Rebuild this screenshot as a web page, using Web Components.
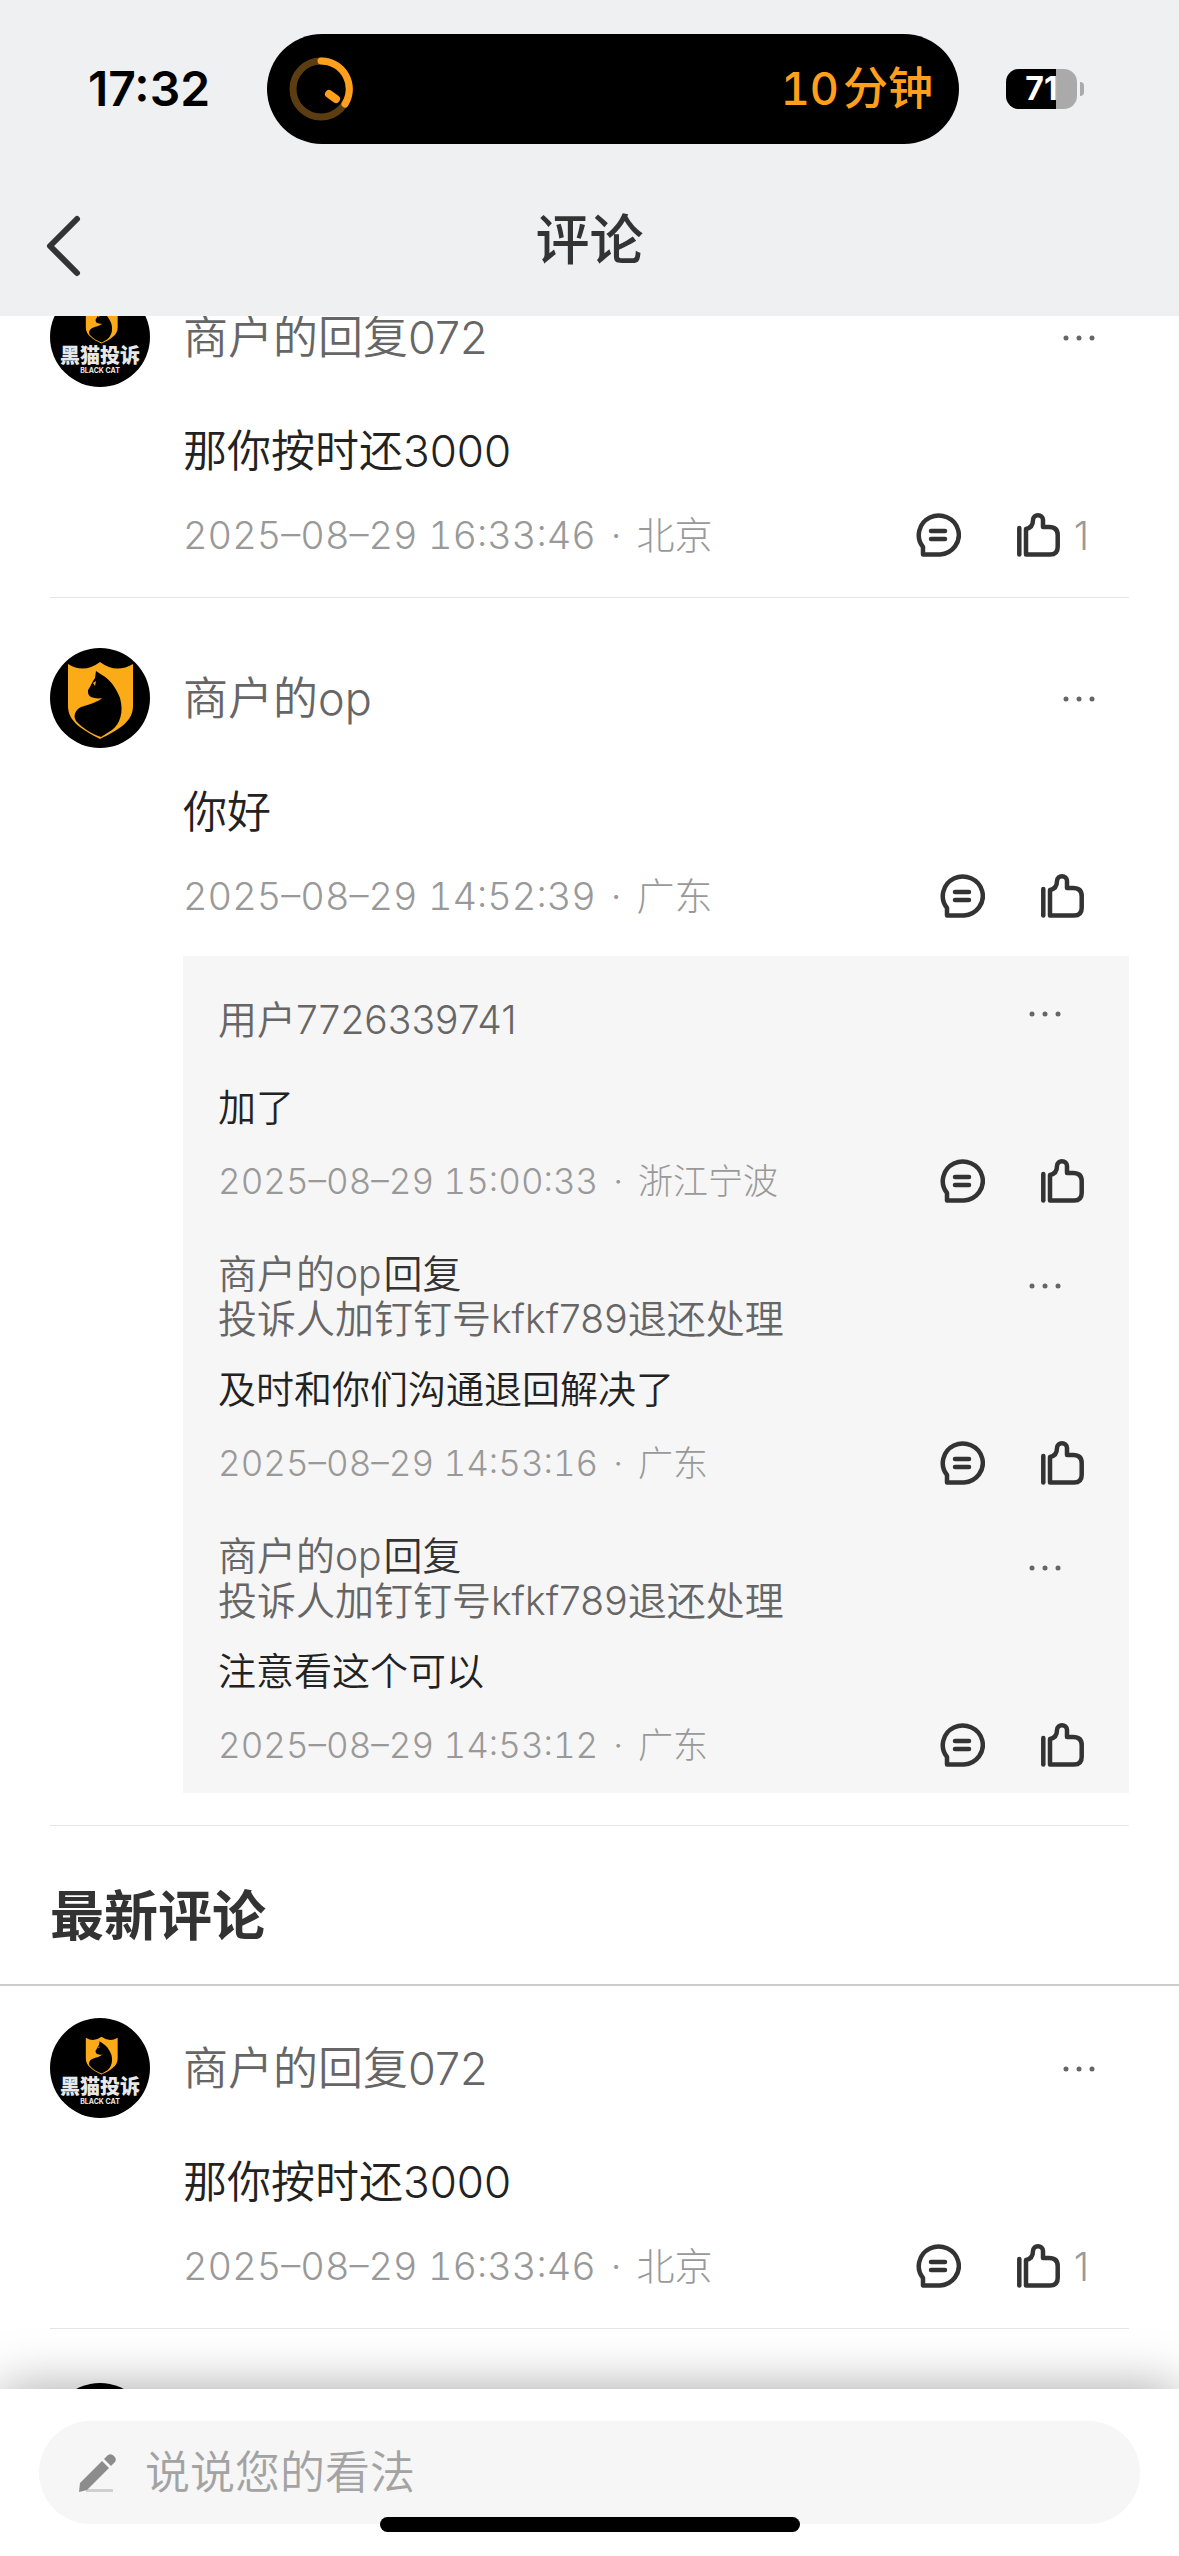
<!DOCTYPE html>
<html lang="zh-CN">
<head>
<meta charset="utf-8">
<meta name="viewport" content="width=device-width, initial-scale=1">
<title>评论</title>
<style>
    body {
        margin: 0;
        background: #fff;
        font-family: Inter, "Noto Sans CJK SC", sans-serif;
        font-weight: 350;
        color: #333;
    }
</style>
</head>
<body>
<comment-page>
    <status-bar slot="top" time="17:32" timer="10" unit="分钟" battery="71"></status-bar>
    <nav-bar slot="top">评论</nav-bar>

    <comment-item logo="text" name="商户的回复072" date="2025–08–29 16:33:46" place="北京" likes="1">那你按时还3000</comment-item>
    <comment-item logo="cat" name="商户的op" date="2025–08–29 14:52:39" place="广东">
        你好
        <reply-item slot="replies" name="用户7726339741" date="2025–08–29 15:00:33" place="浙江宁波">加了</reply-item>
        <reply-item slot="replies" name="商户的op" to="投诉人加钉钉号kfkf789退还处理" date="2025–08–29 14:53:16" place="广东">及时和你们沟通退回解决了</reply-item>
        <reply-item slot="replies" name="商户的op" to="投诉人加钉钉号kfkf789退还处理" date="2025–08–29 14:53:12" place="广东">注意看这个可以</reply-item>
    </comment-item>
    <section-heading>最新评论</section-heading>
    <comment-item first logo="text" name="商户的回复072" date="2025–08–29 16:33:46" place="北京" likes="1">那你按时还3000</comment-item>
    <comment-item logo="cat"></comment-item>

    <comment-input slot="bottom" placeholder="说说您的看法"></comment-input>
</comment-page>

<script>
class StatusBar extends HTMLElement {
    constructor() {
        super();
        this.attachShadow({ mode: "open" });
        this.shadowRoot.innerHTML = `
        <style>
            :host {
                display: flex;
                align-items: center;
                padding: 34px 95px 0 88px;
            }
            .time {
                width: 122px;
                margin-right: 57px;
                font-size: 48px;
                font-weight: 600;
                line-height: 56px;
                color: #000;
                white-space: nowrap;
            }
            .island {
                flex: 1;
                display: flex;
                align-items: center;
                justify-content: space-between;
                box-sizing: border-box;
                height: 110px;
                padding: 0 26px 0 22px;
                margin-right: 47px;
                border-radius: 55px;
                background: #000;
                color: #ff9f1c;
                font-size: 45px;
                font-weight: 500;
                line-height: 56px;
            }
            .timer {
                display: flex;
                align-items: baseline;
                gap: 4px;
                font-variant-numeric: tabular-nums;
            }
            .battery {
                display: flex;
                align-items: center;
                gap: 3px;
            }
            .level {
                width: 71px;
                height: 40px;
                border-radius: 13px;
                background: linear-gradient(to right, #000 70%, #aaa 70%);
                color: #fff;
                font-size: 32px;
                font-weight: 700;
                line-height: 40px;
                text-align: center;
            }
            .nub {
                width: 4px;
                height: 14px;
                border-radius: 0 4px 4px 0;
                background: #aaa;
            }
            svg { display: block; }
        </style>
        <span class="time"></span>
        <div class="island">
            <svg width="64" height="64" viewBox="0 0 64 64" fill="none" stroke-width="7">
                <circle cx="32" cy="32" r="28" stroke="#5c3d12"/>
                <path d="M32 4A28 28 0 0 1 56 47" stroke="#ff9f1c" stroke-linecap="round"/>
                <path d="M40 37L47 42" stroke="#ff9f1c" stroke-width="8" stroke-linecap="round"/>
            </svg>
            <div class="timer"><span class="minutes"></span><span class="unit"></span></div>
        </div>
        <div class="battery"><span class="level"></span><span class="nub"></span></div>`;
    }
    connectedCallback() {
        this.shadowRoot.querySelector(".time").textContent = this.getAttribute("time");
        this.shadowRoot.querySelector(".minutes").textContent = this.getAttribute("timer");
        this.shadowRoot.querySelector(".unit").textContent = this.getAttribute("unit");
        this.shadowRoot.querySelector(".level").textContent = this.getAttribute("battery");
    }
}
customElements.define("status-bar", StatusBar);

class NavBar extends HTMLElement {
    constructor() {
        super();
        this.attachShadow({ mode: "open" });
        this.shadowRoot.innerHTML = `
        <style>
            :host {
                display: grid;
                grid-template-columns: 120px 1fr 120px;
                align-items: center;
                box-sizing: border-box;
                height: 172px;
                padding-top: 22px;
            }
            button {
                border: 0;
                padding: 10px 40px 0 46px;
                background: none;
            }
            h1 {
                margin: 0;
                font-size: 54px;
                font-weight: 500;
                line-height: 64px;
                text-align: center;
            }
            svg { display: block; }
        </style>
        <button type="button" aria-label="返回">
            <svg width="36" height="62" viewBox="0 0 36 62" fill="none" stroke="#333" stroke-width="6" stroke-linecap="round" stroke-linejoin="round">
                <path d="M31 4L4 31L31 58"/>
            </svg>
        </button>
        <h1><slot></slot></h1>`;
    }
}
customElements.define("nav-bar", NavBar);

class UserAvatar extends HTMLElement {
    constructor() {
        super();
        this.attachShadow({ mode: "open" });
    }
    connectedCallback() {
        const shield = `
            <path fill="#fbab18" d="M18 16Q34 26 50 14Q66 26 83 16V58C83 74 68 82 50 91C33 82 18 74 18 58Z"/>
            <path fill="#000" d="M46 23L52 27C60 31 66 40 70 50C74 64 70 76 62 82L51 89C42 86 32 80 26 73C23 68 25 62 31 59C40 56 48 54 52 50C48 51 44 50 41 49C38 47 38 45 38 42C41 38 42 34 45 30Z"/>
            <path fill="#fbab18" d="M43 35L46 33L45 38Z"/>`;
        const withText = `
            <g transform="translate(27 12) scale(.49)">${shield}</g>
            <text x="50" y="76" font-size="20" font-weight="900">黑猫投诉</text>
            <text x="50" y="86" font-size="7" font-weight="700">BLACK CAT</text>`;
        this.shadowRoot.innerHTML = `
        <style>
            :host {
                display: block;
                width: 100px;
                height: 100px;
                border-radius: 50%;
                overflow: hidden;
                background: #000;
            }
            svg { display: block; }
            text { fill: #e8e8e8; text-anchor: middle; }
        </style>
        <svg width="100" height="100" viewBox="0 0 100 100">${this.getAttribute("logo") === "text" ? withText : shield}</svg>`;
    }
}
customElements.define("user-avatar", UserAvatar);

class MoreButton extends HTMLElement {
    constructor() {
        super();
        this.attachShadow({ mode: "open" });
        this.shadowRoot.innerHTML = `
        <style>
            :host { display: block; }
            button {
                display: flex;
                align-items: center;
                height: 70px;
                padding: 0;
                border: 0;
                background: none;
            }
        </style>
        <button type="button" aria-label="更多">
            <svg width="32" height="6" viewBox="0 0 32 6" fill="#666">
                <circle cx="3" cy="3" r="2.5"/><circle cx="16" cy="3" r="2.5"/><circle cx="29" cy="3" r="2.5"/>
            </svg>
        </button>`;
    }
}
customElements.define("more-button", MoreButton);

class CommentMeta extends HTMLElement {
    constructor() {
        super();
        this.attachShadow({ mode: "open" });
        this.shadowRoot.innerHTML = `
        <style>
            :host {
                display: flex;
                align-items: center;
                height: 44px;
                padding-right: 45px;
                color: #999;
                line-height: 44px;
                font-weight: 300;
                white-space: nowrap;
            }
            :host([likes]) { padding-right: 40px; }
            .info {
                flex: 1;
                display: flex;
                align-items: baseline;
                gap: 15px;
                font-variant-numeric: tabular-nums;
            }
            button {
                display: flex;
                align-items: center;
                gap: 14px;
                height: 44px;
                margin-left: 56px;
                padding: 0;
                border: 0;
                background: none;
                color: #999;
                font-family: inherit;
                font-size: 39px;
                font-weight: 300;
            }
            svg {
                display: block;
                fill: none;
                stroke: #333;
                stroke-width: 4.5;
                stroke-linecap: round;
                stroke-linejoin: round;
            }
        </style>
        <div class="info"><time></time><span>·</span><span class="place"></span></div>
        <button type="button" aria-label="回复">
            <svg width="45" height="44" viewBox="0 0 45 44">
                <path d="M7 41.5V34A20 19.5 0 1 1 24 41.5Z"/>
                <path d="M15 18H29M15 26H29"/>
            </svg>
        </button>
        <button type="button" class="like" aria-label="点赞">
            <svg width="43" height="44" viewBox="0 0 43 44">
                <path d="M2.3 15V41.5"/>
                <path d="M9 41.5V16C14 15 16 12 16 7C16 .5 26 1 26 7V14H32C38 14 40.7 17 40.7 22V34C40.7 39 38 41.5 33 41.5Z"/>
            </svg>
        </button>`;
    }
    connectedCallback() {
        this.shadowRoot.querySelector("time").textContent = this.getAttribute("date");
        this.shadowRoot.querySelector(".place").textContent = this.getAttribute("place");
        if (this.hasAttribute("likes")) {
            const count = document.createElement("span");
            count.textContent = this.getAttribute("likes");
            this.shadowRoot.querySelector(".like").appendChild(count);
        }
    }
}
customElements.define("comment-meta", CommentMeta);

class CommentItem extends HTMLElement {
    constructor() {
        super();
        this.attachShadow({ mode: "open" });
    }
    connectedCallback() {
        const replies = this.querySelector("reply-item") ? `<div class="replies"><slot name="replies"></slot></div>` : "";
        const likes = this.hasAttribute("likes") ? `likes="${this.getAttribute("likes")}"` : "";
        const content = !this.hasAttribute("name") ? "" : `
        <div>
            <header><span>${this.getAttribute("name")}</span><more-button></more-button></header>
            <p><slot></slot></p>
            <comment-meta date="${this.getAttribute("date")}" place="${this.getAttribute("place")}" ${likes}></comment-meta>
            ${replies}
        </div>`;
        this.shadowRoot.innerHTML = `
        <style>
            :host {
                display: grid;
                grid-template-columns: 100px 1fr;
                column-gap: 33px;
                margin: 0 50px;
                padding: 50px 0 ${replies ? 32 : 40}px;
                border-bottom: 1px solid #e6e6e6;
            }
            :host([first]) {
                padding-top: 32px;
                margin-bottom: 4px;
            }
            header {
                display: flex;
                align-items: center;
                justify-content: space-between;
                height: 102px;
                padding-right: 34px;
                color: #666;
                font-size: 45px;
                line-height: 60px;
            }
            p {
                margin: 32px 0;
                font-size: 44px;
                line-height: 60px;
                color: #222;
            }
            comment-meta { font-size: 38px; }
            .replies {
                margin-top: 38px;
                padding: 23px 0 26px 35px;
                background: #f6f6f6;
            }
        </style>
        <user-avatar logo="${this.getAttribute("logo")}"></user-avatar>
        ${content}`;
    }
}
customElements.define("comment-item", CommentItem);

class ReplyItem extends HTMLElement {
    constructor() {
        super();
        this.attachShadow({ mode: "open" });
    }
    connectedCallback() {
        const to = this.getAttribute("to");
        this.shadowRoot.innerHTML = `
        <style>
            :host { display: block; }
            :host(:not(:last-child)) { margin-bottom: 48px; }
            header {
                display: flex;
                justify-content: space-between;
                min-height: 80px;
                padding-right: 68px;
                color: #666;
                font-size: 39px;
                line-height: 45px;
            }
            .names { align-self: center; }
            .names div { display: flex; gap: 2px; }
            .verb { color: #333; }
            p {
                margin: 22px 0 26px;
                font-size: 38px;
                line-height: 52px;
                color: #222;
            }
            comment-meta { font-size: 35px; }
        </style>
        <header>
            <div class="names">
                <div><span>${this.getAttribute("name")}</span>${to ? `<span class="verb">回复</span>` : ""}</div>
                ${to ? `<div>${to}</div>` : ""}
            </div>
            <more-button></more-button>
        </header>
        <p><slot></slot></p>
        <comment-meta date="${this.getAttribute("date")}" place="${this.getAttribute("place")}"></comment-meta>`;
    }
}
customElements.define("reply-item", ReplyItem);

class SectionHeading extends HTMLElement {
    constructor() {
        super();
        this.attachShadow({ mode: "open" });
        this.shadowRoot.innerHTML = `
        <style>
            :host {
                display: block;
                padding: 59px 50px 35px;
                border-bottom: 2px solid #ccc;
            }
            h2 {
                margin: 0;
                font-size: 54px;
                font-weight: 700;
                line-height: 64px;
            }
        </style>
        <h2><slot></slot></h2>`;
    }
}
customElements.define("section-heading", SectionHeading);

class CommentInput extends HTMLElement {
    constructor() {
        super();
        this.attachShadow({ mode: "open" });
        this.shadowRoot.innerHTML = `
        <style>
            :host {
                display: block;
                position: relative;
                padding: 32px 39px;
                background: #fff;
                box-shadow: 0 0 50px rgba(0, 0, 0, .35);
            }
            label {
                display: flex;
                align-items: center;
                gap: 27px;
                height: 103px;
                padding: 0 39px;
                border-radius: 52px;
                background: #f6f6f6;
            }
            input {
                flex: 1;
                min-width: 0;
                padding: 0;
                border: 0;
                outline: 0;
                background: none;
                color: #333;
                font: inherit;
                font-size: 45px;
            }
            input::placeholder { color: #a3a3a3; }
            .home {
                position: absolute;
                bottom: 24px;
                left: 50%;
                width: 420px;
                height: 15px;
                margin-left: -210px;
                border-radius: 8px;
                background: #000;
            }
        </style>
        <label>
            <svg width="40" height="40" viewBox="0 0 40 40" fill="#8c8c8c">
                <path fill="#d0d0d0" d="M8 36H35V39H8Z"/>
                <path d="M1 39L2 30L24 8L31 15L9 37Z"/>
                <path d="M26 6L30 2Q33 0 36 3Q39 6 37 9L33 13Z"/>
            </svg>
            <input type="text" aria-label="说说您的看法">
        </label>
        <div class="home"></div>`;
    }
    connectedCallback() {
        this.shadowRoot.querySelector("input").placeholder = this.getAttribute("placeholder");
    }
}
customElements.define("comment-input", CommentInput);

class CommentPage extends HTMLElement {
    constructor() {
        super();
        this.attachShadow({ mode: "open" });
        this.shadowRoot.innerHTML = `
        <style>
            :host {
                display: flex;
                flex-direction: column;
                height: 100vh;
            }
            .top { background: #eff0f2; }
            main {
                flex: 1;
                min-height: 0;
                overflow-y: auto;
                scrollbar-width: none;
            }
        </style>
        <div class="top"><slot name="top"></slot></div>
        <main><slot></slot></main>
        <slot name="bottom"></slot>`;
    }
    connectedCallback() {
        // the list opens a little way down
        this.shadowRoot.querySelector("main").scrollTop = 79;
    }
}
customElements.define("comment-page", CommentPage);
</script>
</body>
</html>
